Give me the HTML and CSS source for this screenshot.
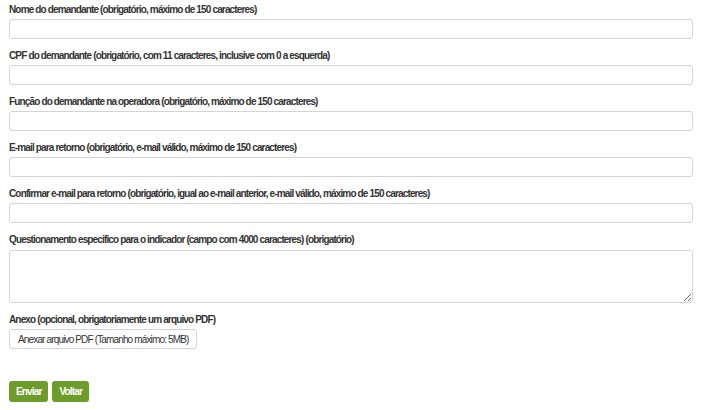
FILE: index.html
```html
<!DOCTYPE html>
<html lang="pt-BR">
<head>
<meta charset="utf-8">
<title>Formulário</title>
<link rel="stylesheet" href="styles.css">
</head>
<body>
<form class="form">
  <div class="field">
    <label class="label">Nome do demandante (obrigatório, máximo de 150 caracteres)</label>
    <input class="input" type="text">
  </div>
  <div class="field">
    <label class="label">CPF do demandante (obrigatório, com 11 caracteres, inclusive com 0 a esquerda)</label>
    <input class="input" type="text">
  </div>
  <div class="field">
    <label class="label">Função do demandante na operadora (obrigatório, máximo de 150 caracteres)</label>
    <input class="input" type="text">
  </div>
  <div class="field">
    <label class="label">E-mail para retorno (obrigatório, e-mail válido, máximo de 150 caracteres)</label>
    <input class="input" type="text">
  </div>
  <div class="field">
    <label class="label">Confirmar e-mail para retorno (obrigatório, igual ao e-mail anterior, e-mail válido, máximo de 150 caracteres)</label>
    <input class="input" type="text">
  </div>
  <div class="field">
    <label class="label">Questionamento especifico para o indicador (campo com 4000 caracteres) (obrigatório)</label>
    <textarea class="textarea"></textarea>
  </div>
  <div class="field">
    <label class="label">Anexo (opcional, obrigatoriamente um arquivo PDF)</label>
    <div><button type="button" class="file-btn">Anexar arquivo PDF (Tamanho máximo: 5MB)</button></div>
  </div>
  <div class="actions">
    <button type="button" class="btn">Enviar</button>
    <button type="button" class="btn">Voltar</button>
  </div>
</form>
</body>
</html>
```
FILE: styles.css
```css
html, body {
  margin: 0;
  padding: 0;
  background: #fff;
}
body {
  padding: 3px 12px 0 9px;
  font-family: "Liberation Sans", Arial, sans-serif;
  font-size: 10px;
  letter-spacing: -0.85px;
  color: #333;
}
.form {
  display: flex;
  flex-direction: column;
}
.field {
  display: flex;
  flex-direction: column;
  margin-bottom: 10px;
}
.label {
  font-weight: bold;
  line-height: 14px;
  margin-bottom: 2px;
}
.input {
  box-sizing: border-box;
  height: 20px;
  width: 100%;
  border: 1px solid #d4d4d4;
  border-radius: 3px;
  margin: 0;
  background: #fff;
}
.textarea {
  box-sizing: border-box;
  height: 53px;
  width: 100%;
  border: 1px solid #d4d4d4;
  border-radius: 3px;
  margin: 1px 0 0;
  resize: vertical;
}
.file-btn {
  box-sizing: border-box;
  height: 20px;
  padding: 0 7px 0 8px;
  border: 1px solid #d4d4d4;
  border-radius: 3px;
  background: #fff;
  font-family: inherit;
  font-size: 10px;
  letter-spacing: -0.85px;
  color: #333;
  margin: 0;
}
.actions {
  display: flex;
  gap: 4px;
  margin-top: 22px;
}
.btn {
  box-sizing: border-box;
  height: 21px;
  padding: 0 7px;
  border: none;
  border-radius: 3px;
  background: #6e9c2b;
  color: #fff;
  font-family: inherit;
  font-size: 10px;
  letter-spacing: -0.85px;
  font-weight: bold;
  margin: 0;
}
```
